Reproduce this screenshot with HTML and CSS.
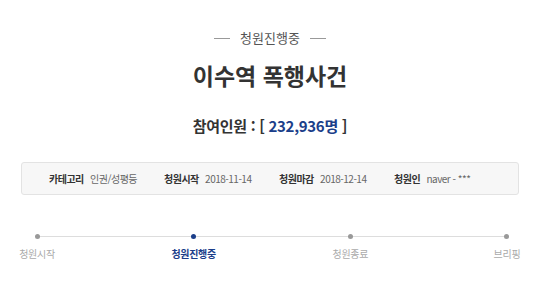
FILE: index.html
```html
<!DOCTYPE html>
<html lang="ko">
<head>
  <meta charset="UTF-8" />
  <title>청원진행중</title>
  <link rel="stylesheet" href="styles.css">
</head>
<body>

<div class="petition">
  <p class="status">청원진행중</p>
  <h1 class="title">이수역 폭행사건</h1>
  <p class="count">참여인원 : [ <span class="num">232,936명</span> ]</p>

  <ul class="info">
    <li><b>카테고리</b> 인권/성평등</li>
    <li><b>청원시작</b> 2018-11-14</li>
    <li><b>청원마감</b> 2018-12-14</li>
    <li><b>청원인</b> naver - ***</li>
  </ul>

  <div class="progress">
    <div class="step">
      <span class="dot"></span>
      <span class="label">청원시작</span>
    </div>
    <div class="step active">
      <span class="dot"></span>
      <span class="label">청원진행중</span>
    </div>
    <div class="step">
      <span class="dot"></span>
      <span class="label">청원종료</span>
    </div>
    <div class="step">
      <span class="dot"></span>
      <span class="label">브리핑</span>
    </div>
  </div>
</div>

</body>
</html>
```

FILE: styles.css
```css
body {
  margin: 0;
  background: #fff;
  font-family: "Noto Sans CJK KR", "Noto Sans", sans-serif;
  color: #333;
}
.petition {
  padding: 0 21px;
}
.status {
  margin: 0;
  padding-top: 28px;
  display: flex;
  justify-content: center;
  align-items: center;
  gap: 10px;
  font-size: 13px;
  line-height: 20px;
  color: #555;
}
.status::before,
.status::after {
  content: "";
  width: 16px;
  height: 1px;
  background: #999;
}
.title {
  margin: 12px 0 0;
  text-align: center;
  font-size: 23px;
  line-height: 30px;
  font-weight: bold;
  color: #333;
}
.count {
  margin: 25px 0 0;
  text-align: center;
  font-size: 15px;
  line-height: 22px;
  font-weight: bold;
  letter-spacing: -0.3px;
  color: #333;
}
.count .num {
  color: #1b3e8a;
}
.info {
  list-style: none;
  margin: 25px 0 0;
  padding: 0 0 0 27px;
  height: 31px;
  display: flex;
  align-items: center;
  background: #f7f7f7;
  border: 1px solid #e3e3e3;
  border-radius: 3px;
  font-size: 10px;
  letter-spacing: -0.5px;
  color: #666;
}
.info li {
  width: 115px;
}
.info li:last-child {
  width: auto;
}
.info b {
  color: #333;
  margin-right: 4px;
}
.progress {
  margin: 39px -18px 0 -14px;
  display: flex;
  justify-content: space-between;
  position: relative;
}
.progress::before {
  content: "";
  position: absolute;
  left: 30px;
  right: 30px;
  top: 2px;
  height: 1px;
  background: #ddd;
}
.step {
  width: 60px;
  display: flex;
  flex-direction: column;
  align-items: center;
  position: relative;
}
.dot {
  width: 5px;
  height: 5px;
  border-radius: 50%;
  background: #999;
}
.label {
  margin-top: 7px;
  font-size: 10px;
  line-height: 16px;
  letter-spacing: -0.3px;
  color: #aaa;
}
.step.active .dot {
  background: #1b3e8a;
}
.step.active .label {
  color: #1b3e8a;
  font-weight: bold;
}
```
